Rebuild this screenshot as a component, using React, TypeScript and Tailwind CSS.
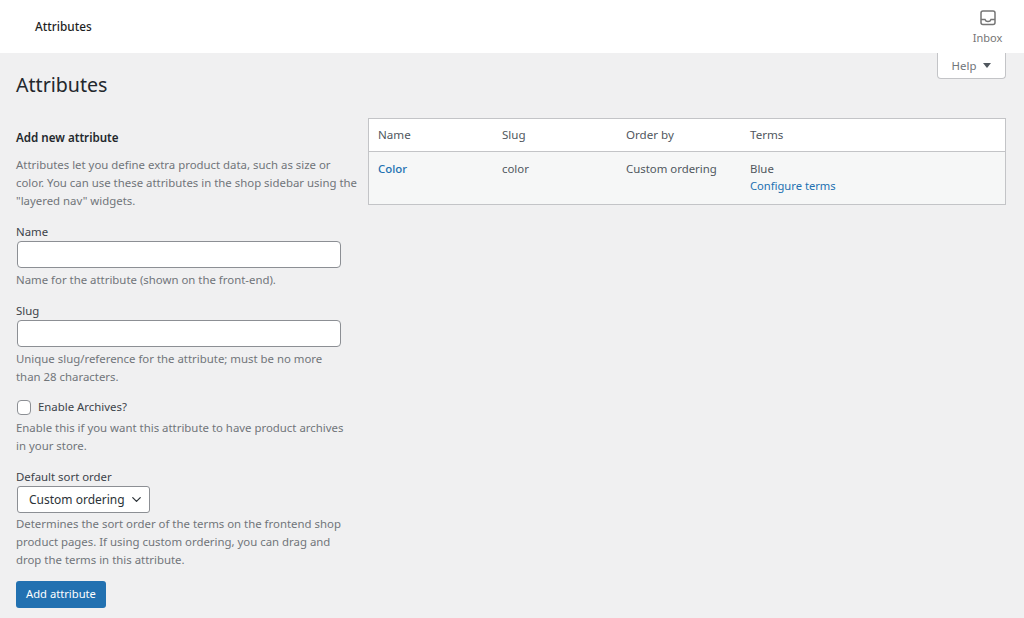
import { ChevronDown } from 'lucide-react';

function Hint({ children }: { children: React.ReactNode }) {
  return <p className="text-[11.4px] leading-[18px] text-[#70757a]">{children}</p>;
}

export default function App() {
  return (
    <div className="relative min-h-[618px] overflow-hidden bg-[#f0f0f1] font-['Noto_Sans',sans-serif] text-[11.4px] text-[#3c434a]">
      <header className="flex h-[53px] items-center justify-between bg-white pl-[35px] pr-[18px]">
        <h2 className="text-[11.8px] font-medium text-[#1e1e1e]">Attributes</h2>
        <div className="flex w-[37px] flex-col items-center text-[#757575]">
          <svg width="18" height="18" viewBox="0 0 18 18" fill="none" stroke="currentColor" strokeWidth="1.5">
            <rect x="2" y="2" width="14" height="13.500" rx="2" />
            <path d="M2 10.500h4c.5 1.400 1.600 2 3 2s2.500-.6 3-2h4" />
          </svg>
          <span className="mt-[3px] text-[11px] leading-[15px]">Inbox</span>
        </div>
      </header>

      <div className="absolute right-[18px] top-[53px] flex h-[26px] w-[69px] items-center justify-center gap-[7px] rounded-b-[4px] border border-t-0 border-[#c3c4c7] bg-white text-[#70757a]">
        <span>Help</span>
        <span className="h-0 w-0 border-x-[4px] border-t-[5px] border-x-transparent border-t-[#50575e]" />
      </div>

      <main className="px-4">
        <h1 className="pt-[18px] text-[19.6px] leading-[27px] font-normal text-[#23282d]">Attributes</h1>

        <div className="mt-[20px] flex gap-[10px]">
          <section className="w-[342px] shrink-0">
            <h3 className="pt-[10px] text-[11.6px] leading-[20px] font-semibold text-[#23282d]">Add new attribute</h3>
            <div className="mt-[8px]">
              <Hint>Attributes let you define extra product data, such as size or color. You can use these attributes in the shop sidebar using the "layered nav" widgets.</Hint>
            </div>

            <label className="mt-[13px] block leading-[18px]">Name</label>
            <input className="ml-[1px] block h-[27px] w-[324px] rounded-[4px] border border-[#8c8f94] bg-white" />
            <div className="mt-[3px]">
              <Hint>Name for the attribute (shown on the front-end).</Hint>
            </div>

            <label className="mt-[13px] block leading-[18px]">Slug</label>
            <input className="ml-[1px] block h-[27px] w-[324px] rounded-[4px] border border-[#8c8f94] bg-white" />
            <div className="mt-[3px] w-[330px]">
              <Hint>Unique slug/reference for the attribute; must be no more than 28 characters.</Hint>
            </div>

            <label className="mt-[12px] flex items-center gap-[7px] leading-[18px]">
              <span className="ml-[1px] h-[15px] w-[14px] rounded-[4px] border border-[#8c8f94] bg-white" />
              Enable Archives?
            </label>
            <div className="mt-[3px] w-[330px]">
              <Hint>Enable this if you want this attribute to have product archives in your store.</Hint>
            </div>

            <label className="mt-[13px] block leading-[18px]">Default sort order</label>
            <div className="ml-[1px] flex h-[27px] w-[133px] items-center justify-between rounded-[3px] border border-[#8c8f94] bg-white pl-[11px] pr-[5px] text-[12px] whitespace-nowrap text-[#2c3338]">
              <span>Custom ordering</span>
              <ChevronDown size={15} strokeWidth={2} />
            </div>
            <div className="mt-[2px] w-[330px]">
              <Hint>Determines the sort order of the terms on the frontend shop product pages. If using custom ordering, you can drag and drop the terms in this attribute.</Hint>
            </div>

            <button className="mt-[12px] h-[27px] w-[90px] rounded-[3px] bg-[#2271b1] text-[11.2px] text-white">Add attribute</button>
          </section>

          <section className="mr-[2px] h-[87px] flex-1 border border-[#c3c4c7] bg-white text-[#50575e]">
            <div className="grid h-[33px] grid-cols-[124px_124px_124px_1fr] items-center border-b border-[#c3c4c7] pl-[9px] text-[11.6px]">
              <span>Name</span>
              <span>Slug</span>
              <span>Order by</span>
              <span>Terms</span>
            </div>
            <div className="grid h-[52px] grid-cols-[124px_124px_124px_1fr] bg-[#f6f7f7] pl-[9px] pt-[8px] leading-[17px]">
              <a className="font-medium text-[#2271b1]">Color</a>
              <span>color</span>
              <span>Custom ordering</span>
              <div>
                <div>Blue</div>
                <a className="text-[11.2px] text-[#2271b1]">Configure terms</a>
              </div>
            </div>
          </section>
        </div>
      </main>
    </div>
  );
}
